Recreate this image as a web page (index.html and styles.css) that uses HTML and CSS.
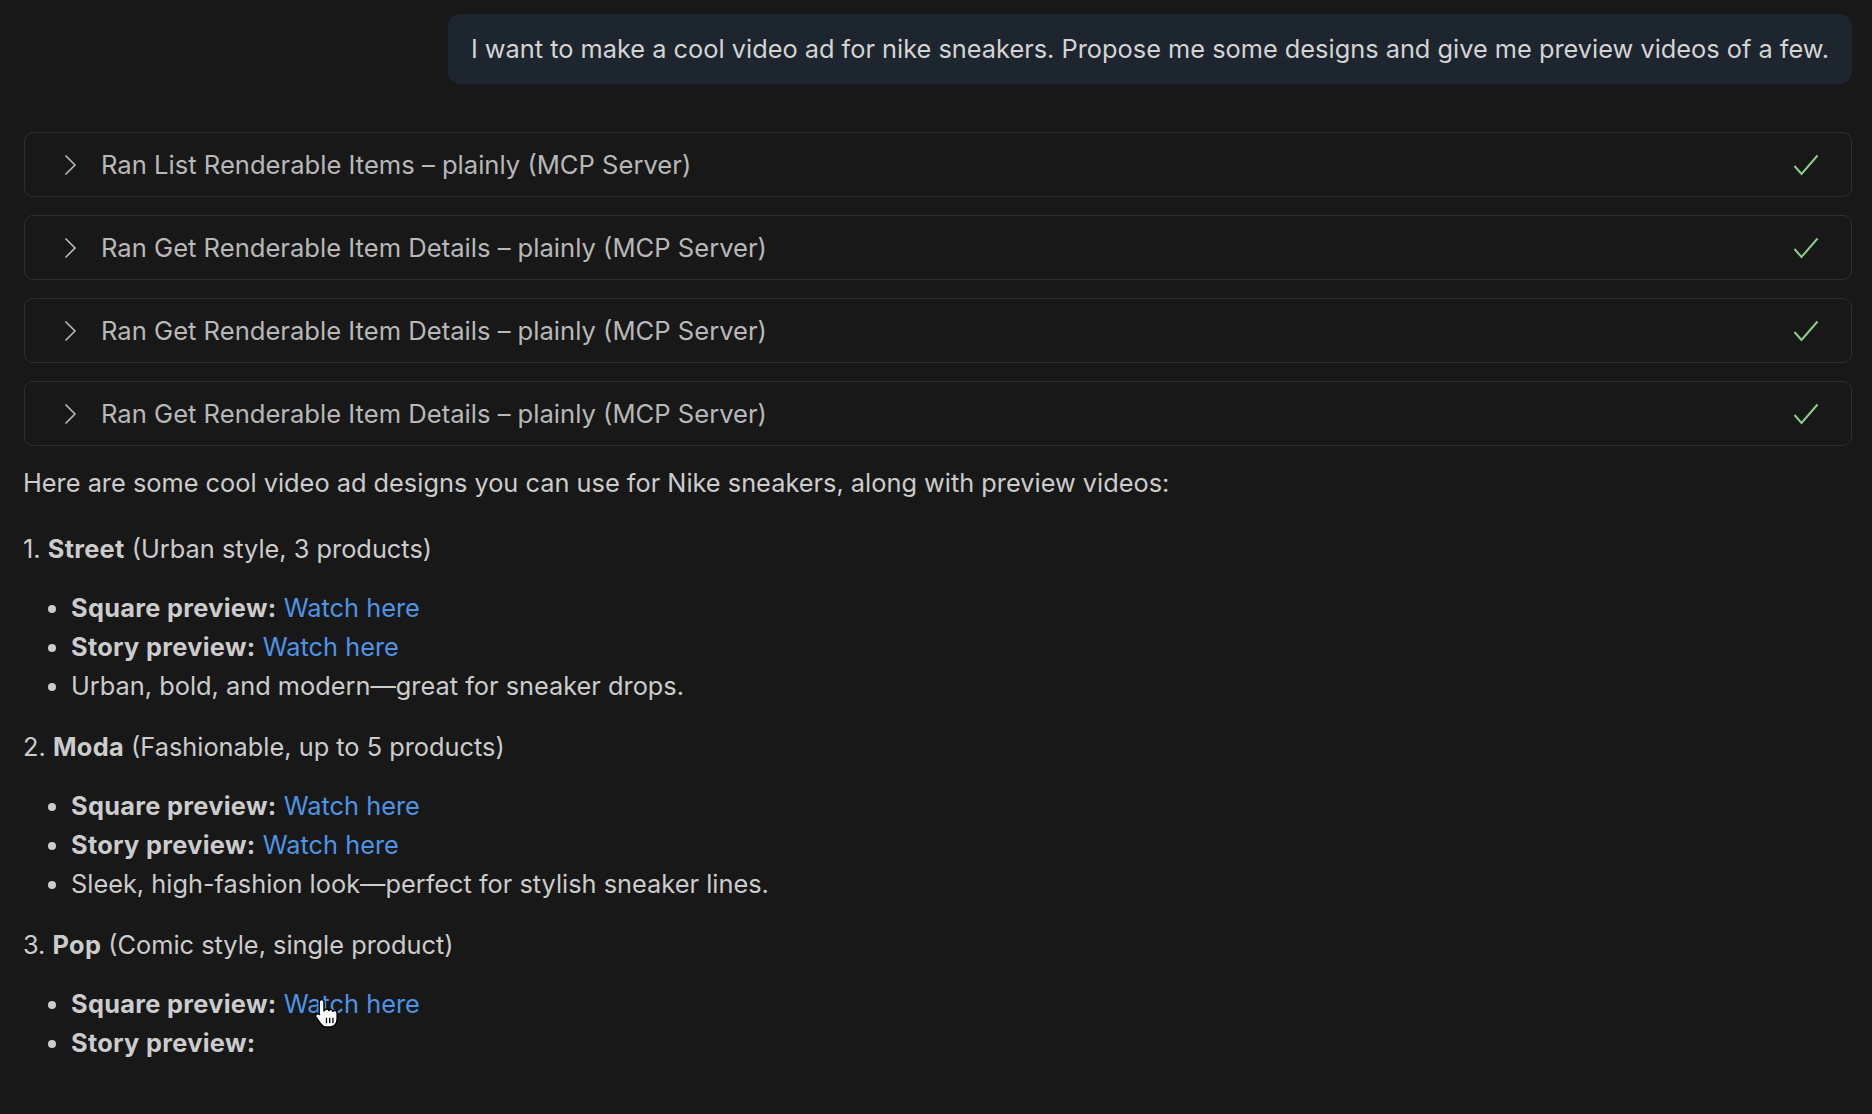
FILE: index.html
```html
<!DOCTYPE html>
<html lang="en">
<head>
    <meta charset="UTF-8">
    <title>Chat - plainly MCP</title>
    <link rel="stylesheet" href="styles.css">
</head>
<body>

    <div class="chat">
        <div class="user-row">
            <div class="user-bubble">I want to make a cool video ad for nike sneakers. Propose me some designs and give me preview videos of a few.</div>
        </div>

        <div class="tool-list">
            <div class="tool-call">
                <svg class="chevron" viewBox="0 0 14 22"><path d="M2.5 1.5 12 11 2.5 20.5"/></svg>
                <span class="tool-name">Ran List Renderable Items – plainly (MCP Server)</span>
                <svg class="check" viewBox="0 0 26 22"><path d="M1.5 12 8.5 20 24.5 1.5"/></svg>
            </div>
            <div class="tool-call">
                <svg class="chevron" viewBox="0 0 14 22"><path d="M2.5 1.5 12 11 2.5 20.5"/></svg>
                <span class="tool-name">Ran Get Renderable Item Details – plainly (MCP Server)</span>
                <svg class="check" viewBox="0 0 26 22"><path d="M1.5 12 8.5 20 24.5 1.5"/></svg>
            </div>
            <div class="tool-call">
                <svg class="chevron" viewBox="0 0 14 22"><path d="M2.5 1.5 12 11 2.5 20.5"/></svg>
                <span class="tool-name">Ran Get Renderable Item Details – plainly (MCP Server)</span>
                <svg class="check" viewBox="0 0 26 22"><path d="M1.5 12 8.5 20 24.5 1.5"/></svg>
            </div>
            <div class="tool-call">
                <svg class="chevron" viewBox="0 0 14 22"><path d="M2.5 1.5 12 11 2.5 20.5"/></svg>
                <span class="tool-name">Ran Get Renderable Item Details – plainly (MCP Server)</span>
                <svg class="check" viewBox="0 0 26 22"><path d="M1.5 12 8.5 20 24.5 1.5"/></svg>
            </div>
        </div>

        <div class="answer">
            <p class="intro">Here are some cool video ad designs you can use for Nike sneakers, along with preview videos:</p>

            <ol class="designs">
                <li>
                    <p class="design-title"><b>Street</b> (Urban style, 3 products)</p>
                    <ul>
                        <li><b>Square preview:</b> <a href="#">Watch here</a></li>
                        <li><b>Story preview:</b> <a href="#">Watch here</a></li>
                        <li>Urban, bold, and modern—great for sneaker drops.</li>
                    </ul>
                </li>
                <li>
                    <p class="design-title"><b>Moda</b> (Fashionable, up to 5 products)</p>
                    <ul>
                        <li><b>Square preview:</b> <a href="#">Watch here</a></li>
                        <li><b>Story preview:</b> <a href="#">Watch here</a></li>
                        <li>Sleek, high-fashion look—perfect for stylish sneaker lines.</li>
                    </ul>
                </li>
                <li>
                    <p class="design-title"><b>Pop</b> (Comic style, single product)</p>
                    <ul>
                        <li><b>Square preview:</b> <a href="#" class="hovered">Watch here</a></li>
                        <li><b>Story preview:</b></li>
                    </ul>
                </li>
            </ol>
        </div>

        <!-- mouse pointer over the link -->
        <svg class="pointer" viewBox="0 0 24 30">
            <path d="M7 2.2c1.3 0 2.2.9 2.2 2.2v8.2l.6-.3c.3-1 1.2-1.6 2.2-1.4.8.1 1.4.7 1.6 1.4.4-.7 1.2-1.1 2.1-1 .9.1 1.5.8 1.7 1.6.4-.5 1.1-.8 1.9-.7 1.2.2 2 1.2 2 2.4v5.6c0 4-2.6 7.2-6.6 7.2h-3.3c-2.2 0-3.9-1-5.1-2.8L2 18.7c-.7-1-.5-2.3.4-3 .9-.6 2.1-.5 2.8.3l-.4-.5V4.4C4.8 3.1 5.7 2.2 7 2.2z" fill="#fff" stroke="#000" stroke-width="1.3" stroke-linejoin="round"/>
            <path d="M11.5 19v5M14.5 19v5M17.5 19v5" stroke="#000" stroke-width="1.2"/>
        </svg>
    </div>

</body>
</html>
```

FILE: styles.css
```css
/* Page */
body {
    margin: 0;
    background-color: #181818;
    color: #cccccc;
    font-family: Inter, "Liberation Sans", sans-serif;
    font-size: 25.6px;
}

.chat {
    position: relative;
    padding: 14px 20px 40px 23px;
}

/* User message */
.user-row {
    display: flex;
    justify-content: flex-end;
}

.user-bubble {
    background-color: #1d252e;
    border-radius: 12px;
    padding: 20px 23px 21px 23px;
    font-size: 25.35px;
    line-height: 29px;
    color: #d4d4d4;
}

/* Tool calls */
.tool-list {
    display: flex;
    flex-direction: column;
    gap: 18px;
    margin-top: 48px;
    margin-left: 1px;
}

.tool-call {
    display: flex;
    align-items: center;
    height: 63px;
    border: 1px solid #2f2f2f;
    border-radius: 9px;
    padding: 0 32px 0 38px;
    color: #b8b8b8;
}

.chevron {
    width: 14px;
    height: 22px;
    fill: none;
    stroke: #b8b8b8;
    stroke-width: 1.6;
    margin-right: 24px;
}

.tool-name {
    flex: 1;
}

.check {
    width: 26px;
    height: 22px;
    fill: none;
    stroke: #89d185;
    stroke-width: 2;
}

/* Answer */
.answer {
    font-size: 25.35px;
    line-height: 39px;
}

.intro {
    margin: 17px 0 0 0;
}

.designs {
    list-style: none;
    counter-reset: design;
    margin: 27px 0 0 0;
    padding: 0;
}

.designs > li {
    counter-increment: design;
    margin-bottom: 22px;
}

.design-title {
    margin: 0 0 20px 0;
}

.design-title::before {
    content: counter(design) ". ";
}

.designs ul {
    margin: 0;
    padding-left: 48px;
    list-style: disc;
}

b {
    font-weight: 700;
    letter-spacing: 0.3px;
}

a {
    color: #4e94e6;
    text-decoration: none;
}

.pointer {
    position: absolute;
    left: 314px;
    top: 997px;
    width: 26px;
    height: 33px;
}
```
